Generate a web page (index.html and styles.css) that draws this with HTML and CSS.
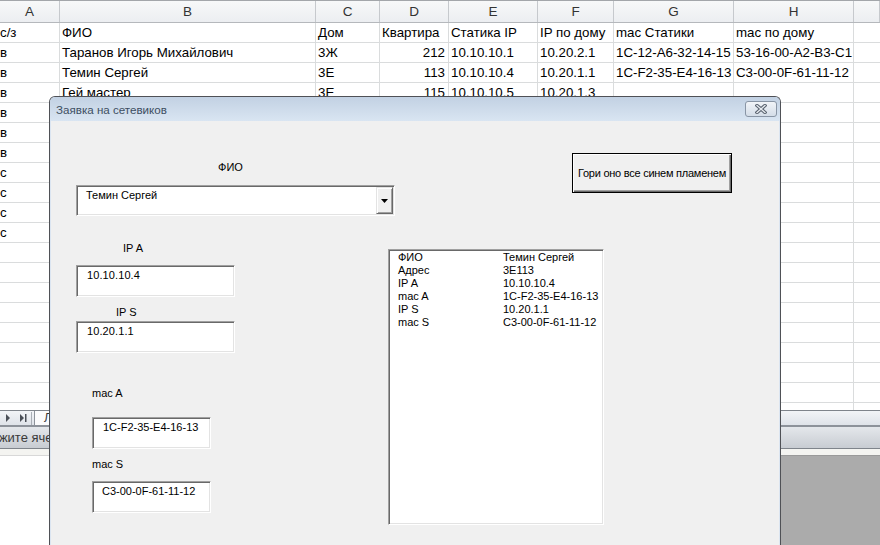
FILE: index.html
```html
<!DOCTYPE html>
<html lang="ru">
<head>
<meta charset="utf-8">
<title>Заявка на сетевиков</title>
<link rel="stylesheet" href="styles.css">
</head>
<body>
<div class="screen">
  <div class="sheet">
    <div class="colhdr">
      <span>A</span><span>B</span><span>C</span><span>D</span><span>E</span><span>F</span><span>G</span><span>H</span><span></span>
    </div>
    <div class="row"><span class="a">с/з</span><span>ФИО</span><span>Дом</span><span>Квартира</span><span>Статика IP</span><span>IP по дому</span><span>mac Статики</span><span>mac по дому</span></div>
    <div class="row"><span class="a">в</span><span>Таранов Игорь Михайлович</span><span>3Ж</span><span class="num">212</span><span>10.10.10.1</span><span>10.20.2.1</span><span>1C-12-A6-32-14-15</span><span>53-16-00-A2-B3-C1</span></div>
    <div class="row"><span class="a">в</span><span>Темин Сергей</span><span>3Е</span><span class="num">113</span><span>10.10.10.4</span><span>10.20.1.1</span><span>1C-F2-35-E4-16-13</span><span>C3-00-0F-61-11-12</span></div>
    <div class="row"><span class="a">в</span><span>Гей мастер</span><span>3Е</span><span class="num">115</span><span>10.10.10.5</span><span>10.20.1.3</span></div>
    <div class="row"><span class="a">в</span></div>
    <div class="row"><span class="a">в</span></div>
    <div class="row"><span class="a">в</span></div>
    <div class="row"><span class="a">с</span></div>
    <div class="row"><span class="a">с</span></div>
    <div class="row"><span class="a">с</span></div>
    <div class="row"><span class="a">с</span></div>
  </div>

  <div class="tabbar">
    <svg class="nav" width="30" height="10" viewBox="0 0 30 10">
      <polygon points="6,1 10,5 6,9" fill="#4a4f57"/>
      <polygon points="20,1 24,5 20,9" fill="#4a4f57"/>
      <rect x="25" y="1" width="1.5" height="8" fill="#4a4f57"/>
    </svg>
    <span class="tabsep"></span>
    <span class="tab">Л</span>
  </div>
  <div class="statusbar"><span class="status-clip"><span class="status">Укажите ячейку</span></span></div>
  <div class="strip"></div>
  <div class="lower">
    <div class="lower-left"></div>
    <div class="lower-right"></div>
  </div>

  <div class="dialog">
    <div class="titlebar">
      <span class="title">Заявка на сетевиков</span>
      <span class="close">
        <svg width="12" height="10" viewBox="0 0 12 10">
          <path d="M2 1.5 L10 8.5 M10 1.5 L2 8.5" stroke="#59626f" stroke-width="3.4" stroke-linecap="square"/>
          <path d="M2 1.5 L10 8.5 M10 1.5 L2 8.5" stroke="#e9edf2" stroke-width="1.3" stroke-linecap="square"/>
        </svg>
      </span>
    </div>
    <div class="form">
      <div class="col-left">
        <div class="lbl lbl-fio">ФИО</div>
        <div class="combo sunken">
          <span class="combo-text">Темин Сергей</span>
          <span class="drop">
            <svg width="7" height="4" viewBox="0 0 7 4"><polygon points="0,0 7,0 3.5,4" fill="#000"/></svg>
          </span>
        </div>
        <div class="lbl lbl-ipa">IP A</div>
        <div class="tb tb-ip sunken">10.10.10.4</div>
        <div class="lbl lbl-ips">IP S</div>
        <div class="tb tb-ip tb-ips sunken">10.20.1.1</div>
        <div class="lbl lbl-maca">mac A</div>
        <div class="tb tb-mac sunken">1C-F2-35-E4-16-13</div>
        <div class="lbl lbl-macs">mac S</div>
        <div class="tb tb-mac tb-macs sunken">C3-00-0F-61-11-12</div>
      </div>
      <div class="col-right">
        <div class="cmd">Гори оно все синем пламенем</div>
        <div class="listbox sunken">
          <span>ФИО</span><span>Темин Сергей</span>
          <span>Адрес</span><span>3Е113</span>
          <span>IP A</span><span>10.10.10.4</span>
          <span>mac A</span><span>1C-F2-35-E4-16-13</span>
          <span>IP S</span><span>10.20.1.1</span>
          <span>mac S</span><span>C3-00-0F-61-11-12</span>
        </div>
      </div>
    </div>
  </div>
</div>
</body>
</html>
```
FILE: styles.css
```css
* { box-sizing: border-box; margin: 0; padding: 0; }

html, body {
  width: 880px;
  height: 545px;
  overflow: hidden;
  background: #fff;
}

body {
  font-family: "Liberation Sans", Arial, sans-serif;
  color: #000;
}

.screen {
  position: relative;
  width: 880px;
  height: 545px;
  overflow: hidden;
  display: flex;
  flex-direction: column;
}

/* ---------- spreadsheet ---------- */
.sheet {
  flex: none;
  height: 410px;
  overflow: hidden;
  background-color: #fff;
  background-image:
    linear-gradient(to right,
      transparent 59px, #dadcdd 59px 60px,
      transparent 60px 315px, #dadcdd 315px 316px,
      transparent 316px 379px, #dadcdd 379px 380px,
      transparent 380px 448px, #dadcdd 448px 449px,
      transparent 449px 537px, #dadcdd 537px 538px,
      transparent 538px 613px, #dadcdd 613px 614px,
      transparent 614px 733px, #dadcdd 733px 734px,
      transparent 734px 853px, #dadcdd 853px 854px,
      transparent 854px),
    repeating-linear-gradient(to bottom, transparent 0 19px, #dadcdd 19px 20px);
  background-position: 0 0, 0 23px;
  background-repeat: no-repeat, repeat;
}

.colhdr,
.row {
  display: grid;
  grid-template-columns: 60px 256px 64px 69px 89px 76px 120px 120px 1fr;
}

.colhdr {
  height: 23px;
  background: linear-gradient(#f7f8f9, #eceef1);
  border-top: 1px solid #a3a6aa;
  border-bottom: 1px solid #b5b8bc;
}

.colhdr > span {
  border-right: 1px solid #c6c9cd;
  text-align: center;
  font-size: 13.5px;
  line-height: 21px;
  color: #333;
}

.row {
  height: 20px;
  font-size: 13.3px;
  line-height: 20px;
}

.row > span {
  padding-left: 2px;
  white-space: nowrap;
  overflow: hidden;
}

.row > .a { padding-left: 0; }
.row > .num { text-align: right; padding-right: 4px; }

/* ---------- bottom bars ---------- */
.tabbar {
  flex: none;
  height: 17px;
  border-top: 1px solid #7f848b;
  border-bottom: 2px solid #8d929a;
  background: linear-gradient(#f2f4f7, #dfe3e9);
  display: flex;
  align-items: stretch;
}

.nav { margin-top: 2px; flex: none; }

.tabsep {
  width: 1px;
  margin: 1px 2px 0 1px;
  background: #a9aeb5;
}

.tab {
  padding-left: 9px;
  border-left: 1px solid #8d929a;
  background: #fbfbfc;
  font-size: 12px;
  line-height: 14px;
  color: #333;
  width: 30px;
}

.statusbar {
  flex: none;
  height: 22px;
  border-bottom: 1px solid #7f848b;
  background: linear-gradient(#e4e7eb, #c8ccd2);
}

.status-clip {
  display: block;
  width: 49px;
  overflow: hidden;
  white-space: nowrap;
}

.status {
  display: inline-block;
  margin-left: -22px;
  font-size: 13px;
  line-height: 21px;
  color: #3a3a3a;
}

.strip {
  flex: none;
  height: 6px;
  background: #f4f4f1;
}

.lower {
  flex: 1;
  display: flex;
}

.lower-left { width: 300px; background: #fff; border-top: 1px solid #d8d8d8; }
.lower-right { flex: 1; background: #ababab; border-top: 1px solid #9a9a9a; }

/* ---------- dialog window ---------- */
.dialog {
  position: absolute;
  left: 49px;
  top: 96px;
  width: 732px;
  height: 470px;
  border: 1px solid #4f5156;
  border-bottom: none;
  border-radius: 6px 6px 0 0;
  background: #dbe5f1;
  display: flex;
  flex-direction: column;
}

.titlebar {
  flex: none;
  height: 24px;
  display: flex;
  align-items: center;
  justify-content: space-between;
  padding: 0 3px 0 6px;
  background: linear-gradient(#c2d1e3, #d9e5f2);
  border-radius: 5px 5px 0 0;
}

.title {
  font-size: 11.6px;
  color: #3d4e62;
}

.close {
  width: 32px;
  height: 16px;
  border: 1px solid #8995a5;
  border-radius: 3px;
  background: linear-gradient(#f1f4f8, #d4dde8);
  display: flex;
  align-items: center;
  justify-content: center;
}

.form {
  flex: 1;
  margin: 0 1px;
  background: #f0f0f0;
  display: flex;
  padding-left: 25px;
  font-size: 11px;
  line-height: 13px;
}

.col-left {
  width: 312px;
  flex: none;
  display: flex;
  flex-direction: column;
  align-items: flex-start;
}

.col-right {
  flex: 1;
  display: flex;
  flex-direction: column;
  align-items: flex-start;
}

.lbl { height: 13px; white-space: nowrap; }

.lbl-fio {
  align-self: stretch;
  text-align: center;
  padding-right: 3px;
  margin-top: 40px;
}

.lbl-ipa  { margin: 26px 0 0 47px; }
.lbl-ips  { margin: 9px 0 0 40px; }
.lbl-maca { margin: 34px 0 0 16px; }
.lbl-macs { margin: 9px 0 0 16px; }

.sunken {
  background: #fff;
  border: 1px solid;
  border-color: #a0a0a0 #fff #fff #a0a0a0;
  box-shadow: inset 1px 1px 0 #696969, inset -1px -1px 0 #e3e3e3;
}

.combo {
  margin-top: 11px;
  width: 319px;
  height: 31px;
  display: flex;
  padding: 1px;
}

.combo-text {
  flex: 1;
  padding: 2px 0 0 8px;
}

.drop {
  width: 17px;
  flex: none;
  background: #f0f0f0;
  border: 1px solid;
  border-color: #e3e3e3 #696969 #696969 #e3e3e3;
  box-shadow: inset 1px 1px 0 #fff, inset -1px -1px 0 #a0a0a0;
  display: flex;
  align-items: center;
  justify-content: center;
}

.tb {
  height: 32px;
  padding: 3px 0 0 10px;
  white-space: nowrap;
}

.tb-ip { width: 159px; margin-top: 10px; letter-spacing: 0.1px; }
.tb-ips { margin-top: 2px; }

.tb-mac {
  width: 119px;
  margin: 17px 0 0 16px;
  padding-left: 10px;
}
.tb-macs { margin-top: 10px; padding-left: 9px; }

.cmd {
  margin: 32px 0 0 184px;
  width: 160px;
  height: 40px;
  border: 1px solid #000;
  background: #f0f0f0;
  box-shadow: inset 1px 1px 0 #fff, inset -1px -1px 0 #696969, inset -2px -2px 0 #a0a0a0;
  display: flex;
  align-items: center;
  justify-content: center;
  white-space: nowrap;
  letter-spacing: -0.25px;
}

.listbox {
  margin-top: 56px;
  width: 216px;
  height: 276px;
  padding: 1px 0 0 9px;
  display: grid;
  grid-template-columns: 105px 1fr;
  grid-auto-rows: 13px;
  align-content: start;
  white-space: nowrap;
}
```
